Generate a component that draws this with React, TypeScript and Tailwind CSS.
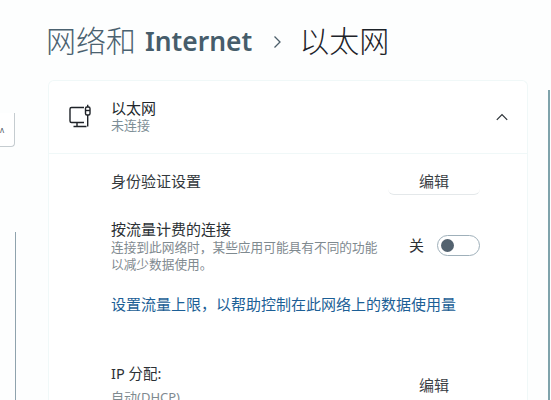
const font = { fontFamily: '"Noto Sans", "Noto Sans CJK SC", sans-serif' };

function EthernetIcon() {
  return (
    <svg width="24" height="26" viewBox="0 0 24 26" fill="none" stroke="#1f2328" strokeWidth="1.4">
      <path d="M15 3.5H2.5a1.5 1.5 0 0 0-1.5 1.5v12a1.5 1.5 0 0 0 1.5 1.5H15" />
      <path d="M8 18.5v3.5M4.5 22.5H17.5" />
      <rect x="16.5" y="3" width="4.5" height="8" rx="1.5" />
      <path d="M18.7 0.8V3M18.7 11v11.5" />
      <path d="M16.5 6.5h4.5" />
    </svg>
  );
}

export default function App() {
  return (
    <div style={font} className="w-[551px] h-[400px] overflow-hidden bg-[#fdfefe] flex">
      <div className="w-[46px] shrink-0 flex flex-col items-start">
        <div className="mt-[113px] w-[15px] h-[34px] shrink-0 bg-white border-r border-b border-[#c5ccd0] rounded-br-sm flex items-center">
          <span className="text-[8px] leading-none text-[#4a5560]">ʌ</span>
        </div>
        <div className="mt-[85px] ml-[15px] w-[1px] flex-1 bg-[#8fa3ad]" />
      </div>

      <div className="w-[482px] shrink-0 flex flex-col">
        <div className="h-[80px] shrink-0 flex items-start pt-[18px] text-[30px] leading-[46px] font-light whitespace-nowrap">
          <span className="text-[#4b6270]">网络和</span>
          <span className="ml-[9px] font-semibold text-[#465d6b] text-[26.4px]">Internet</span>
          <svg className="ml-[21px] mt-[17px]" width="9" height="14" viewBox="0 0 9 14" fill="none" stroke="#4b5e6a" strokeWidth="1.3">
            <path d="M1.5 1.5 7 7l-5.5 5.5" />
          </svg>
          <span className="ml-[17px] text-[#1d2329]">以太网</span>
        </div>

        <div className="ml-[2px] flex-1 border border-[#f0f8f8] border-b-0 rounded-t-md bg-white">
          <div className="h-[73px] flex items-center border-b border-[#f0f8f8] pl-[20px] pr-[19px]">
            <EthernetIcon />
            <div className="ml-[18px] flex-1 mb-[2px]">
              <div className="text-[15px] leading-[18px] text-[#22272b]">以太网</div>
              <div className="text-[13px] leading-[17px] text-[#7d8e96]">未连接</div>
            </div>
            <svg width="12" height="8" viewBox="0 0 12 8" fill="none" stroke="#2b3136" strokeWidth="1.2">
              <path d="M0.8 6.8 6 1.5l5.2 5.3" />
            </svg>
          </div>

          <div className="pl-[62px] pr-[47px]">
            <div className="flex justify-between items-start h-[44px] pt-[16px]">
              <span className="text-[15px] leading-[22px] text-[#33393d]">身份验证设置</span>
              <span className="w-[92px] h-[26px] -mt-[1px] text-center text-[15px] leading-[24px] text-[#3a4045] border-b border-[#e4e8ea] rounded-b-md">编辑</span>
            </div>

            <div className="flex justify-between mt-[21px]">
              <div className="w-[275px]">
                <div className="text-[15px] leading-[20px] text-[#2b3034]">按流量计费的连接</div>
                <div className="text-[12.7px] leading-[17px] text-[#7f8a90]">连接到此网络时，某些应用可能具有不同的功能以减少数据使用。</div>
              </div>
              <div className="flex items-center h-[22px] mt-[15px]">
                <span className="text-[15px] text-[#2b3034]">关</span>
                <span className="ml-[13px] w-[43px] h-[21px] rounded-full border border-[#9fb0ba] bg-white flex items-center pl-[3px]">
                  <span className="w-[13px] h-[13px] rounded-full bg-[#53626f]" />
                </span>
              </div>
            </div>

            <div className="mt-[20px] text-[15px] leading-[22px] text-[#1c5f96] whitespace-nowrap">设置流量上限，以帮助控制在此网络上的数据使用量</div>

            <div className="flex justify-between mt-[47px]">
              <div>
                <div className="text-[14.5px] leading-[22px] text-[#2b3034]">IP 分配:</div>
                <div className="text-[13px] leading-[18px] mt-[4px] text-[#7f8a90]">自动(DHCP)</div>
              </div>
              <span className="w-[92px] mt-[11px] text-center text-[15px] leading-[24px] text-[#3a4045]">编辑</span>
            </div>
          </div>
        </div>
      </div>

      <div className="flex-1 flex justify-end">
        <div className="mt-[90px] w-[2px] mr-[1px] bg-[#7fa3ab]" />
      </div>
    </div>
  );
}
